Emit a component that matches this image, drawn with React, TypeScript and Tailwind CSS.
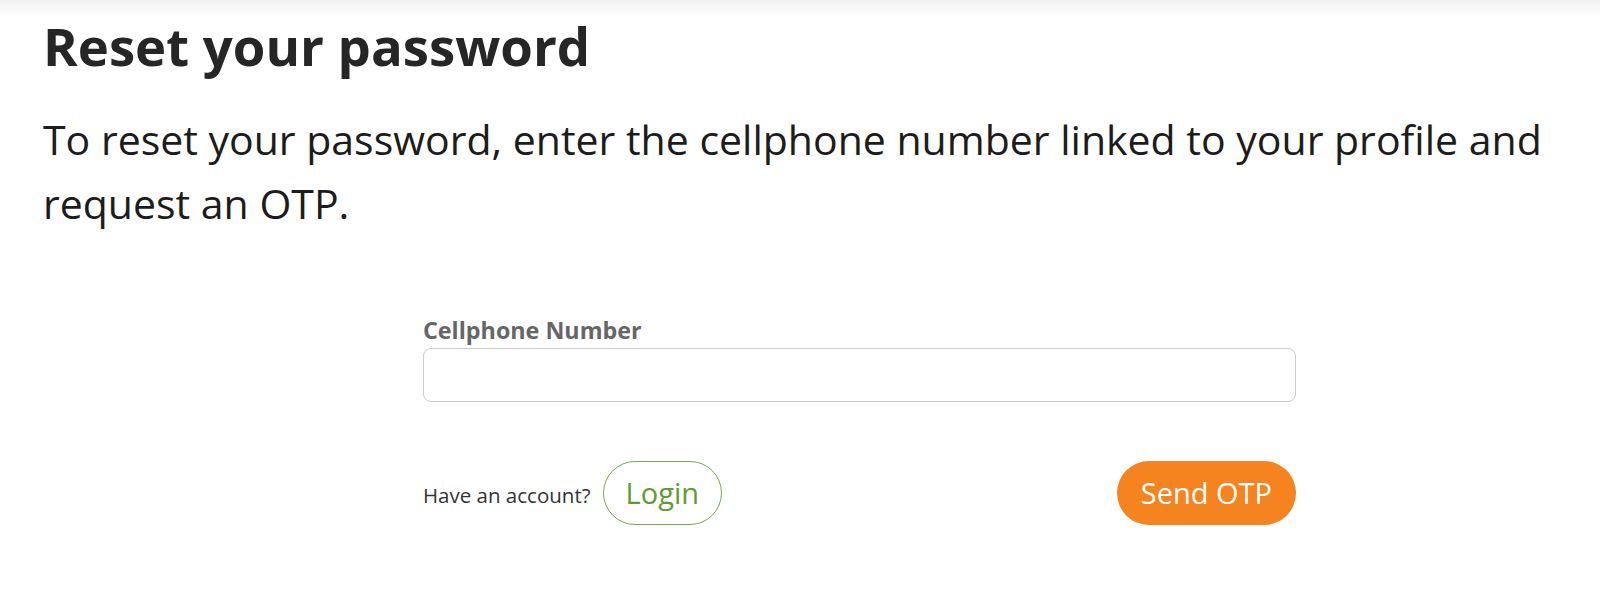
import React from "react";

export default function App() {
  return (
    <div
      className="relative min-h-[610px] w-full bg-white"
      style={{ fontFamily: '"Open Sans", "Noto Sans", sans-serif' }}
    >
      <div className="pointer-events-none absolute left-0 right-0 top-0 h-[18px] bg-gradient-to-b from-[#f1f1f1] to-white" />
      <div className="relative px-[43px] pt-[14px]">
        <h1 className="text-[52.7px] font-bold leading-[64px] text-[#262626]">
          Reset your password
        </h1>
        <p className="mt-[29px] text-[41px] leading-[64px] text-[#1c1c1c]">
          To reset your password, enter the cellphone number linked to your profile and
          request an OTP.
        </p>
        <div className="ml-[380px] mt-[81px] w-[873px]">
          <label className="block text-[23.3px] font-bold leading-[28px] text-[#666666]">
            Cellphone Number
          </label>
          <input
            type="text"
            className="mt-[4px] block h-[54px] w-full rounded-[8px] border border-[#cccccc] bg-white px-3 text-[20px] outline-none"
          />
          <div className="mt-[59px] flex items-center justify-between">
            <div className="flex items-center gap-[12px]">
              <span className="mt-[4px] text-[20.5px] text-[#333333]">Have an account?</span>
              <button className="h-[64px] rounded-full border border-[#76ab4c] bg-white px-[22px] text-[29px] text-[#5f9b2f]">
                Login
              </button>
            </div>
            <button className="h-[64px] rounded-full bg-[#f5831f] px-[24px] text-[29px] text-white">
              Send OTP
            </button>
          </div>
        </div>
      </div>
    </div>
  );
}
